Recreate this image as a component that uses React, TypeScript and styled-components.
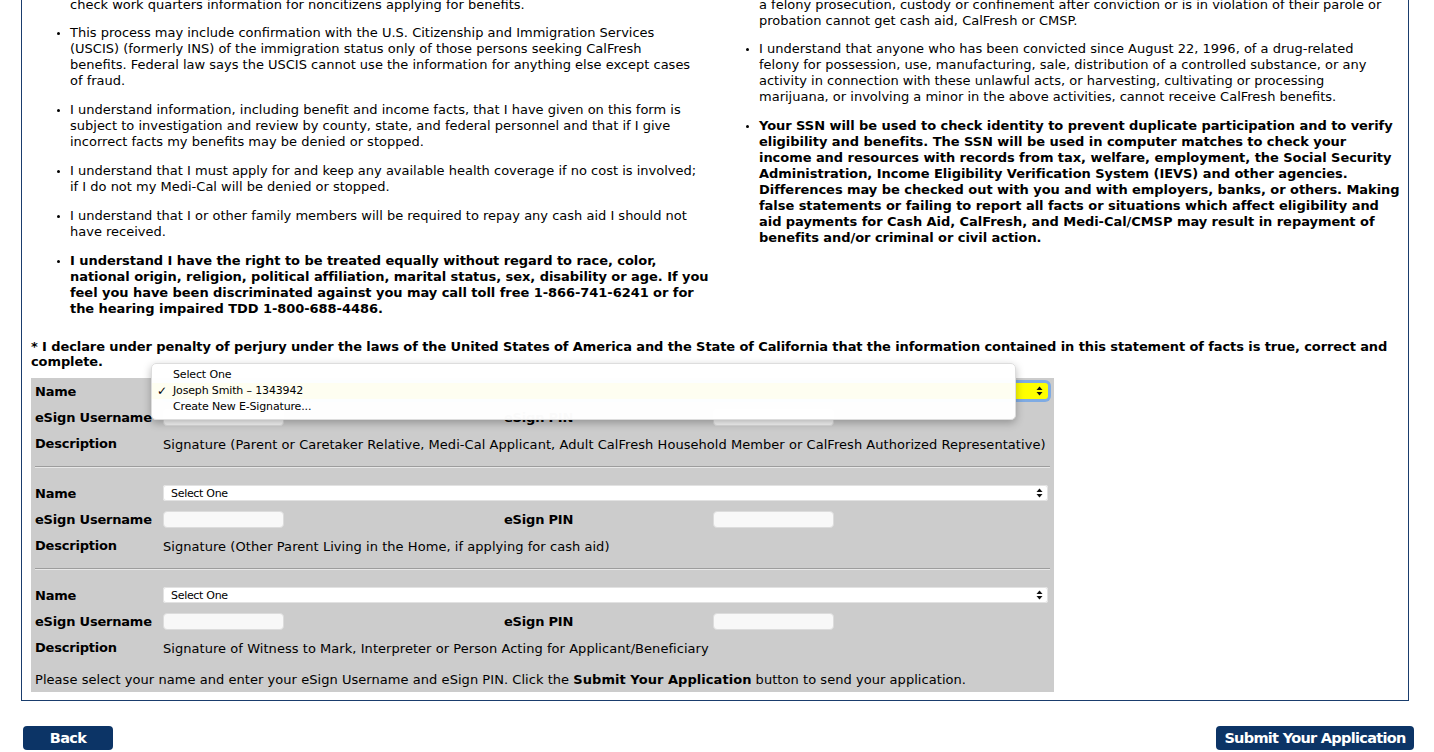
import React from "react";
import styled, { createGlobalStyle } from "styled-components";

const GlobalStyle = createGlobalStyle`
  html, body { margin: 0; padding: 0; background: #ffffff; }
  body { font-family: "DejaVu Sans", Verdana, sans-serif; color: #000; overflow: hidden; }
`;

const Page = styled.div`
  width: 1434px;
  height: 752px;
  overflow: hidden;
`;

const Frame = styled.div`
  margin: -3px 0 0 21px;
  width: 1368px;
  border: 1px solid #1a3d6d;
  border-top: none;
  padding: 0 9px 8px 9px;
`;

const Columns = styled.div`
  display: grid;
  grid-template-columns: 689px 1fr;
`;

const Column = styled.div`
  font-family: "DejaVu Sans", Tahoma, sans-serif;
  font-size: 13px;
  line-height: 16px;
  letter-spacing: 0;
  white-space: nowrap;
`;

const Continuation = styled.div`
  padding-left: 39px;
  margin-bottom: 12px;
`;

const List = styled.ul`
  margin: 0;
  padding-left: 39px;
  list-style: disc;
`;

const Item = styled.li<{ $bold?: boolean }>`
  margin-bottom: 13px;
  font-weight: ${(p) => (p.$bold ? 700 : 400)};
  letter-spacing: ${(p) => (p.$bold ? "-0.05px" : "0")};
  &::marker { font-size: 10px; }
`;

const Declaration = styled.div`
  margin-top: 9px;
  margin-bottom: 9px;
  font-size: 13px;
  font-weight: 700;
  line-height: 15px;
  letter-spacing: -0.1px;
`;

const Panel = styled.div`
  width: 1015px;
  background: #cccccc;
  padding: 0 4px 4px 4px;
`;

const Row = styled.div<{ $h?: number }>`
  display: grid;
  grid-template-columns: 128px 341px 209px 1fr;
  align-items: center;
  height: ${(p) => p.$h ?? 26}px;
`;

const Label = styled.div`
  font-size: 13px;
  font-weight: 700;
  letter-spacing: -0.2px;
  white-space: nowrap;
`;

const Value = styled.div`
  grid-column: 2 / -1;
  font-size: 13px;
  letter-spacing: 0.05px;
  white-space: nowrap;
  padding-top: 1px;
`;

const SelectWrap = styled.div`
  grid-column: 2 / -1;
  position: relative;
  width: 885px;
`;

const SelectBox = styled.div<{ $active?: boolean }>`
  height: 16px;
  box-sizing: border-box;
  border-radius: 3px;
  background: ${(p) => (p.$active ? "#ffff00" : "#ffffff")};
  box-shadow: ${(p) =>
    p.$active ? "0 0 0 3px #7fabe3" : "inset 0 0 0 1px #e2e2e2"};
  display: flex;
  align-items: center;
  justify-content: space-between;
  padding: 0 5px 0 8px;
  font-size: 11px;
  letter-spacing: -0.3px;
`;

const TextInput = styled.div`
  width: 121px;
  height: 17px;
  box-sizing: border-box;
  border-radius: 4px;
  background: #f8f8f8;
  border: 1px solid #dcdcdc;
`;

const Divider = styled.div`
  margin: 9px 0 12px 0;
  height: 0;
  border-top: 1px solid #9d9d9d;
  border-bottom: 1px solid #e8e8e8;
`;

const Note = styled.div`
  margin-top: 11px;
  font-size: 13px;
  line-height: 16px;
  letter-spacing: 0.05px;
  white-space: nowrap;
`;

const Menu = styled.div`
  position: absolute;
  left: -12px;
  top: -20px;
  width: 865px;
  box-sizing: border-box;
  padding: 3px 0 4px 0;
  background: rgba(255, 255, 255, 0.98);
  border: 1px solid #dddddd;
  border-radius: 5px;
  box-shadow: 0 3px 9px rgba(0, 0, 0, 0.28);
  z-index: 5;
`;

const MenuItem = styled.div<{ $checked?: boolean }>`
  position: relative;
  height: 16px;
  line-height: 16px;
  padding-left: 21px;
  font-size: 11px;
  letter-spacing: -0.15px;
  background: ${(p) => (p.$checked ? "#fefef1" : "transparent")};
`;

const Check = styled.span`
  position: absolute;
  left: 5px;
  top: 0;
  font-size: 12px;
  font-weight: 700;
`;

const ButtonBar = styled.div`
  display: flex;
  justify-content: space-between;
  padding: 25px 20px 0 23px;
`;

const NavButton = styled.button<{ $w: number }>`
  width: ${(p) => p.$w}px;
  height: 24px;
  border: none;
  border-radius: 4px;
  background: #0c3466;
  color: #ffffff;
  font-family: "DejaVu Sans", sans-serif;
  font-size: 14.5px;
  font-weight: 700;
  letter-spacing: -0.7px;
  padding: 0;
  cursor: pointer;
`;

const Arrows = () => (
  <svg width="7" height="10" viewBox="0 0 7 10">
    <path d="M3.5 0.5 L6.5 4 L0.5 4 Z" fill="#111" />
    <path d="M3.5 9.5 L6.5 6 L0.5 6 Z" fill="#111" />
  </svg>
);

type Sig = { desc: string; active?: boolean };

const sigs: Sig[] = [
  {
    desc:
      "Signature (Parent or Caretaker Relative, Medi-Cal Applicant, Adult CalFresh Household Member or CalFresh Authorized Representative)",
    active: true,
  },
  { desc: "Signature (Other Parent Living in the Home, if applying for cash aid)" },
  {
    desc:
      "Signature of Witness to Mark, Interpreter or Person Acting for Applicant/Beneficiary",
  },
];

const SignGroup = ({ sig }: { sig: Sig }) => (
  <>
    <Row>
      <Label>Name</Label>
      <SelectWrap>
        <SelectBox $active={sig.active}>
          <span>{sig.active ? "" : "Select One"}</span>
          <Arrows />
        </SelectBox>
        {sig.active && (
          <Menu>
            <MenuItem>Select One</MenuItem>
            <MenuItem $checked>
              <Check>✓</Check>Joseph Smith – 1343942
            </MenuItem>
            <MenuItem>Create New E-Signature...</MenuItem>
          </Menu>
        )}
      </SelectWrap>
    </Row>
    <Row>
      <Label>eSign Username</Label>
      <TextInput />
      <Label>eSign PIN</Label>
      <TextInput />
    </Row>
    <Row $h={27}>
      <Label>Description</Label>
      <Value>{sig.desc}</Value>
    </Row>
  </>
);

export default function App() {
  return (
    <Page>
      <GlobalStyle />
      <Frame>
        <Columns>
          <Column>
            <Continuation>check work quarters information for noncitizens applying for benefits.</Continuation>
            <List>
              <Item>
                This process may include confirmation with the U.S. Citizenship and Immigration Services
                <br />
                (USCIS) (formerly INS) of the immigration status only of those persons seeking CalFresh
                <br />
                benefits. Federal law says the USCIS cannot use the information for anything else except cases
                <br />
                of fraud.
              </Item>
              <Item>
                I understand information, including benefit and income facts, that I have given on this form is
                <br />
                subject to investigation and review by county, state, and federal personnel and that if I give
                <br />
                incorrect facts my benefits may be denied or stopped.
              </Item>
              <Item>
                I understand that I must apply for and keep any available health coverage if no cost is involved;
                <br />
                if I do not my Medi-Cal will be denied or stopped.
              </Item>
              <Item>
                I understand that I or other family members will be required to repay any cash aid I should not
                <br />
                have received.
              </Item>
              <Item $bold>
                I understand I have the right to be treated equally without regard to race, color,
                <br />
                national origin, religion, political affiliation, marital status, sex, disability or age. If you
                <br />
                feel you have been discriminated against you may call toll free 1-866-741-6241 or for
                <br />
                the hearing impaired TDD 1-800-688-4486.
              </Item>
            </List>
          </Column>
          <Column>
            <Continuation>
              a felony prosecution, custody or confinement after conviction or is in violation of their parole or
              <br />
              probation cannot get cash aid, CalFresh or CMSP.
            </Continuation>
            <List>
              <Item>
                I understand that anyone who has been convicted since August 22, 1996, of a drug-related
                <br />
                felony for possession, use, manufacturing, sale, distribution of a controlled substance, or any
                <br />
                activity in connection with these unlawful acts, or harvesting, cultivating or processing
                <br />
                marijuana, or involving a minor in the above activities, cannot receive CalFresh benefits.
              </Item>
              <Item $bold>
                Your SSN will be used to check identity to prevent duplicate participation and to verify
                <br />
                eligibility and benefits. The SSN will be used in computer matches to check your
                <br />
                income and resources with records from tax, welfare, employment, the Social Security
                <br />
                Administration, Income Eligibility Verification System (IEVS) and other agencies.
                <br />
                Differences may be checked out with you and with employers, banks, or others. Making
                <br />
                false statements or failing to report all facts or situations which affect eligibility and
                <br />
                aid payments for Cash Aid, CalFresh, and Medi-Cal/CMSP may result in repayment of
                <br />
                benefits and/or criminal or civil action.
              </Item>
            </List>
          </Column>
        </Columns>
        <Declaration>
          * I declare under penalty of perjury under the laws of the United States of America and the State of California that the information contained in this statement of facts is true, correct and complete.
        </Declaration>
        <Panel>
          {sigs.map((s, i) => (
            <React.Fragment key={i}>
              {i > 0 && <Divider />}
              <SignGroup sig={s} />
            </React.Fragment>
          ))}
          <Note>
            Please select your name and enter your eSign Username and eSign PIN. Click the <b>Submit Your Application</b> button to send your application.
          </Note>
        </Panel>
      </Frame>
      <ButtonBar>
        <NavButton $w={90}>Back</NavButton>
        <NavButton $w={198}>Submit Your Application</NavButton>
      </ButtonBar>
    </Page>
  );
}
